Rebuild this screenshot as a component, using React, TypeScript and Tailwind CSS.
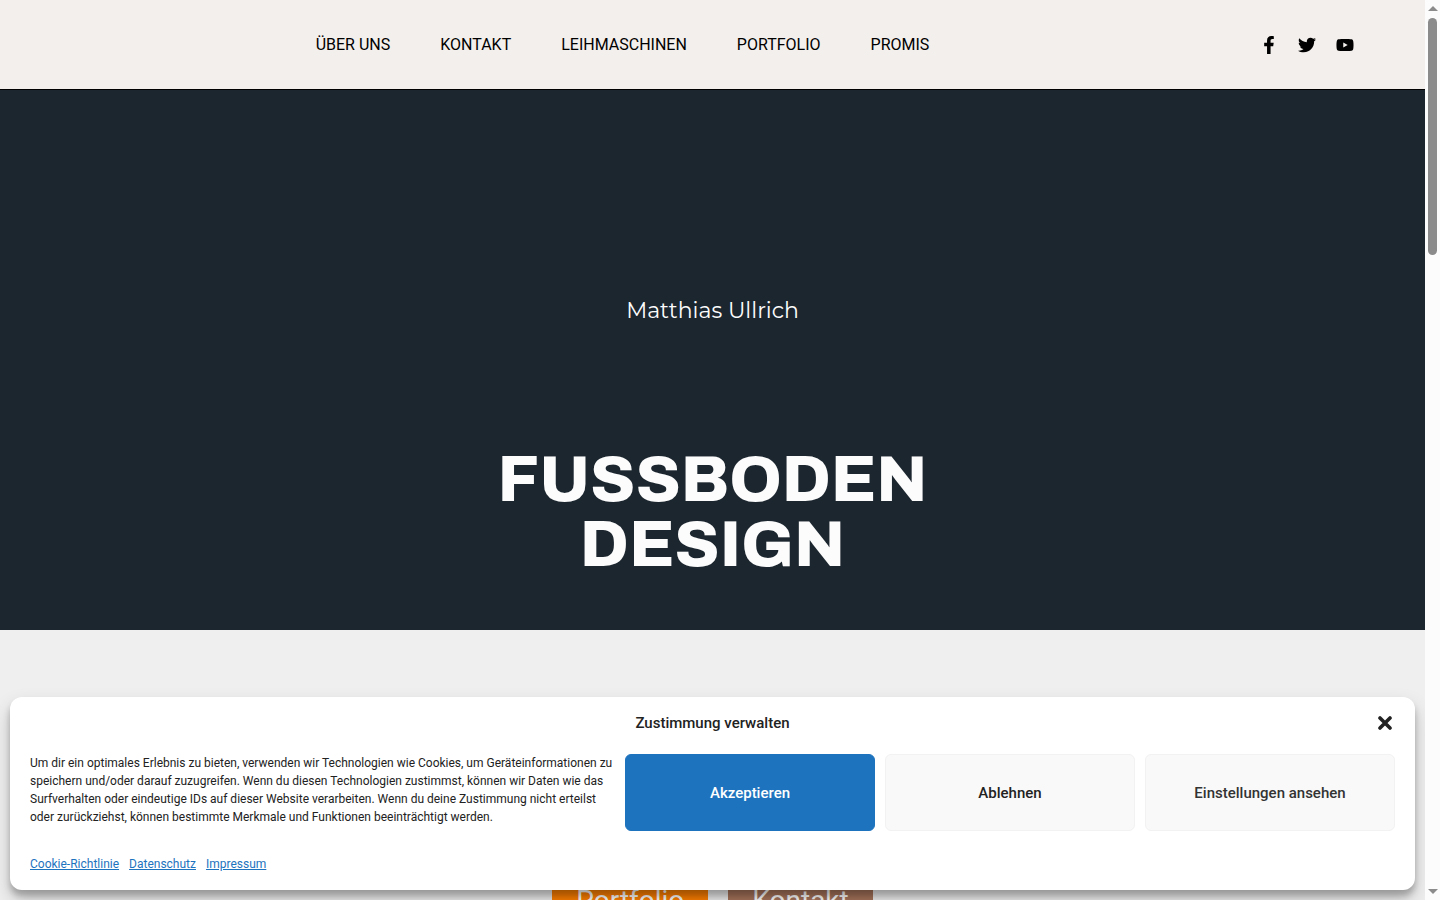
import { useState } from 'react'
import { FaFacebookF, FaTwitter, FaYoutube } from 'react-icons/fa'

const navItems = ['Über uns', 'Kontakt', 'Leihmaschinen', 'Portfolio', 'Promis']

const socialLinks = [
  { label: 'Facebook', icon: FaFacebookF },
  { label: 'Twitter', icon: FaTwitter },
  { label: 'YouTube', icon: FaYoutube },
]

const legalLinks = ['Cookie-Richtlinie', 'Datenschutz', 'Impressum']

function Header() {
  return (
    <header className="flex h-[90px] shrink-0 items-center border-b border-black bg-[#f3efec] text-black">
      <nav className="flex flex-1 justify-center gap-[50px]">
        {navItems.map((item) => (
          <a key={item} href="#" className="text-base uppercase">
            {item}
          </a>
        ))}
      </nav>
      <div className="flex w-[180px] gap-5 pl-[15px]">
        {socialLinks.map(({ label, icon: Icon }) => (
          <a key={label} href="#" aria-label={label}>
            <Icon className="size-[18px]" />
          </a>
        ))}
      </div>
    </header>
  )
}

function Hero() {
  return (
    <section className="flex h-[540px] shrink-0 flex-col items-center bg-[#1c262f] pt-[205px] text-center text-[#fcfcfc]">
      <p className="font-['Montserrat',Inter,sans-serif] text-[22px] leading-8">Matthias Ullrich</p>
      <h1 className="mt-[120px] font-['Archivo',Inter,sans-serif] text-[65px] leading-[65px] font-extrabold">
        FUSSBODEN
        <br />
        DESIGN
      </h1>
    </section>
  )
}

function CookieBanner({ onClose }: { onClose: () => void }) {
  return (
    <div
      role="dialog"
      aria-labelledby="cookie-title"
      className="absolute inset-x-[10px] bottom-[10px] rounded-xl bg-white px-5 pt-[15px] pb-[17px] text-[#222] shadow-[0_10px_20px_rgba(0,0,0,0.19),0_6px_6px_rgba(0,0,0,0.23)]"
    >
      <div className="grid grid-cols-[20px_1fr_20px] items-center">
        <h2 id="cookie-title" className="col-start-2 text-center text-[15px] leading-[22px] font-medium">
          Zustimmung verwalten
        </h2>
        <button type="button" aria-label="Schließen" onClick={onClose} className="flex justify-center">
          <svg viewBox="0 0 14 14" className="size-[14px]" fill="none" stroke="currentColor" strokeWidth="3.6" strokeLinecap="round">
            <path d="M2 2l10 10M12 2L2 12" />
          </svg>
        </button>
      </div>

      <div className="mt-5 flex gap-[10px] text-[15px] leading-[22px] font-medium">
        <p className="flex-1 text-xs leading-[18px] font-normal">
          Um dir ein optimales Erlebnis zu bieten, verwenden wir Technologien wie Cookies, um Geräteinformationen zu
          speichern und/oder darauf zuzugreifen. Wenn du diesen Technologien zustimmst, können wir Daten wie das
          Surfverhalten oder eindeutige IDs auf dieser Website verarbeiten. Wenn du deine Zustimmung nicht erteilst
          oder zurückziehst, können bestimmte Merkmale und Funktionen beeinträchtigt werden.
        </p>
        <button
          type="button"
          onClick={onClose}
          className="h-[77px] w-[250px] rounded-md border border-[#1e73be] bg-[#1e73be] text-white"
        >
          Akzeptieren
        </button>
        <button
          type="button"
          onClick={onClose}
          className="h-[77px] w-[250px] rounded-md border border-[#f2f2f2] bg-[#f9f9f9]"
        >
          Ablehnen
        </button>
        <button
          type="button"
          className="h-[77px] w-[250px] rounded-md border border-[#f2f2f2] bg-[#f9f9f9] text-[#333]"
        >
          Einstellungen ansehen
        </button>
      </div>

      <div className="mt-6 flex gap-[10px] text-xs leading-[18px] text-[#1e73be]">
        {legalLinks.map((link) => (
          <a key={link} href="#" className="underline">
            {link}
          </a>
        ))}
      </div>
    </div>
  )
}

function Scrollbar() {
  return (
    <div aria-hidden="true" className="flex w-[15px] shrink-0 flex-col items-center bg-[#fcfcfc] py-[6px]">
      <svg viewBox="0 0 10 5" className="h-[5px] w-[10px] fill-[#8b8b8b]">
        <path d="M5 0l5 5H0z" />
      </svg>
      <div className="mt-[7px] h-[237px] w-[9px] rounded-full bg-[#8b8b8b]" />
      <svg viewBox="0 0 10 5" className="mt-auto h-[5px] w-[10px] fill-[#8b8b8b]">
        <path d="M0 0h10L5 5z" />
      </svg>
    </div>
  )
}

export default function App() {
  const [showBanner, setShowBanner] = useState(true)

  return (
    <div className="flex h-screen overflow-hidden font-[Roboto,sans-serif]">
      <div className="relative flex min-w-0 flex-1 flex-col overflow-hidden bg-[#efefef]">
        <Header />
        <Hero />
        <section className="flex shrink-0 justify-center gap-5 pt-[241px] text-[28px] leading-[60px] text-white">
          <a href="#" className="bg-[#ff8000] px-6">
            Portfolio
          </a>
          <a href="#" className="bg-[#a8755c] px-6">
            Kontakt
          </a>
        </section>
        {showBanner && <CookieBanner onClose={() => setShowBanner(false)} />}
      </div>
      <Scrollbar />
    </div>
  )
}
